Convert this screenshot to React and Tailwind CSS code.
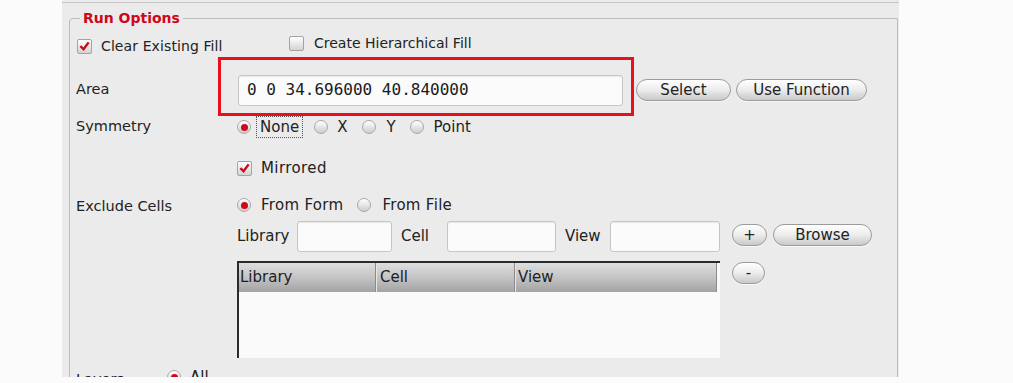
import React from "react";

function Check({ checked }) {
  return (
    <span className="inline-flex h-[15px] w-[15px] shrink-0 items-center justify-center rounded-[2px] border border-[#a3a3a3] bg-gradient-to-b from-[#ffffff] to-[#d3d3d3] shadow-[inset_0_1px_0_#ffffff]">
      {checked && (
        <svg viewBox="0 0 12 12" className="h-[11px] w-[11px]">
          <path d="M1.5 5.5 L5 9 L10.5 1.5" stroke="#d0061a" strokeWidth="2.6" fill="none" strokeLinejoin="miter" />
        </svg>
      )}
    </span>
  );
}

function Radio({ on }) {
  return (
    <span className="inline-flex h-[14px] w-[14px] shrink-0 items-center justify-center rounded-full border border-[#a9a9a9] bg-gradient-to-b from-[#ffffff] to-[#cdcdcd]">
      {on && <span className="h-[7px] w-[7px] rounded-full bg-[#d0061a]" />}
    </span>
  );
}

function Btn({ children, className }) {
  return (
    <button
      className={
        "flex h-[22px] shrink-0 items-center justify-center rounded-full border border-[#9c9c9c] bg-gradient-to-b from-[#ffffff] via-[#ececec] to-[#c9c9c9] text-[15px] leading-none text-[#222] shadow-[0_1px_0_#f8f8f8] " +
        className
      }
    >
      {children}
    </button>
  );
}

function Field({ className, children }) {
  return (
    <div
      className={
        "flex h-[31px] shrink-0 items-center rounded-[3px] border border-[#c6c6c6] bg-[#fbfbfb] shadow-[inset_0_1px_1px_rgba(0,0,0,0.08)] " +
        className
      }
    >
      {children}
    </div>
  );
}

export default function App() {
  return (
    <div className="h-[383px] w-[1013px] bg-[#fbfbfb] font-['DejaVu_Sans',sans-serif] text-[15px] text-[#222]">
      <div className="ml-[62px] h-[377px] w-[837px] overflow-hidden bg-[#ebebeb] pt-[2px]">
        <div className="border-t border-[#c6c6c6]">
          <fieldset className="ml-[7px] mt-[7px] h-[420px] w-[829px] rounded-tl-[4px] border border-[#bcbcbc]">
            <legend className="ml-[10px] px-[3px] text-[14px] font-bold leading-[16px] text-[#d0061a]">
              Run Options
            </legend>

            {/* row 1: checkboxes */}
            <div className="flex h-[44px] items-start text-[14px]">
              <div className="ml-[7px] mt-[13px] flex w-[212px] shrink-0 items-center gap-[9px]">
                <Check checked />
                <span className="leading-[15px] tracking-[0.1px]">Clear Existing Fill</span>
              </div>
              <div className="mt-[10px] flex items-center gap-[10px]">
                <Check />
                <span className="leading-[15px]">Create Hierarchical Fill</span>
              </div>
            </div>

            {/* Area */}
            <div className="relative flex h-[40px] items-center">
              <span className="w-[167px] shrink-0 pl-[6px] text-[14.5px]">Area</span>
              <Field className="ml-[1px] w-[385px] pl-[8px]">
                <span className="font-['DejaVu_Sans_Mono',monospace] text-[16px] leading-none text-[#1a1a1a]">
                  0 0 34.696000 40.840000
                </span>
              </Field>
              <Btn className="ml-[13px] w-[95px]">Select</Btn>
              <Btn className="ml-[5px] w-[131px]">Use Function</Btn>
              <div className="pointer-events-none absolute left-[148px] top-[-13px] h-[59px] w-[416px] border-[3px] border-[#e8101c]" />
            </div>

            {/* Symmetry */}
            <div className="flex h-[34px] items-center">
              <span className="w-[167px] shrink-0 pl-[6px] text-[14.5px]">Symmetry</span>
              <Radio on />
              <span className="ml-[5px] flex h-[22px] items-center border border-dotted border-[#555] px-[3px]">None</span>
              <span className="ml-[11px] flex items-center gap-[9px]">
                <Radio />
                <span>X</span>
              </span>
              <span className="ml-[15px] flex items-center gap-[10px]">
                <Radio />
                <span>Y</span>
              </span>
              <span className="ml-[14px] flex items-center gap-[10px]">
                <Radio />
                <span>Point</span>
              </span>
            </div>

            {/* Mirrored */}
            <div className="flex h-[48px] items-center">
              <span className="w-[167px] shrink-0" />
              <Check checked />
              <span className="ml-[9px] tracking-[0.4px]">Mirrored</span>
            </div>

            {/* Exclude Cells */}
            <div className="flex h-[26px] items-center">
              <span className="w-[167px] shrink-0 pl-[6px] pt-[3px] text-[14.5px]">Exclude Cells</span>
              <Radio on />
              <span className="ml-[10px] tracking-[0.3px]">From Form</span>
              <span className="ml-[14px] flex items-center gap-[11px]">
                <Radio />
                <span className="tracking-[0.3px]">From File</span>
              </span>
            </div>

            {/* Library / Cell / View */}
            <div className="flex h-[37px] items-center">
              <span className="w-[167px] shrink-0" />
              <span className="w-[60px] shrink-0">Library</span>
              <Field className="w-[95px]" />
              <span className="ml-[9px] w-[46px] shrink-0">Cell</span>
              <Field className="w-[109px]" />
              <span className="ml-[9px] w-[45px] shrink-0">View</span>
              <Field className="w-[110px]" />
              <Btn className="mb-[3px] ml-[12px] w-[35px] text-[13px]">+</Btn>
              <Btn className="mb-[3px] ml-[6px] w-[99px]">Browse</Btn>
            </div>

            {/* table */}
            <div className="mt-[6px] flex items-start">
              <span className="w-[167px] shrink-0" />
              <div className="h-[97px] w-[483px] shrink-0 border-l-2 border-t-2 border-[#2b2b2b] bg-[#fafafa]">
                <div className="flex h-[29px] w-[478px] bg-gradient-to-b from-[#dedede] via-[#c4c4c4] to-[#a3a3a3] text-[#1e1e1e]">
                  <div className="flex w-[137px] items-center border-r border-[#8a8a8a] pl-[1px]">Library</div>
                  <div className="flex w-[139px] items-center border-l border-r border-l-[#e6e6e6] border-r-[#8a8a8a] pl-[3px]">Cell</div>
                  <div className="flex flex-1 items-center border-l border-r border-l-[#e6e6e6] border-r-[#8a8a8a] pl-[2px]">View</div>
                </div>
              </div>
              <Btn className="ml-[12px] mt-[1px] w-[33px] text-[13px]">-</Btn>
            </div>

            {/* Layers */}
            <div className="mt-[8px] flex h-[22px] items-center">
              <span className="w-[97px] shrink-0 pl-[6px] pt-[6px] text-[14.5px]">Layers</span>
              <Radio on />
              <span className="ml-[9px]">All</span>
            </div>
          </fieldset>
        </div>
      </div>
    </div>
  );
}
